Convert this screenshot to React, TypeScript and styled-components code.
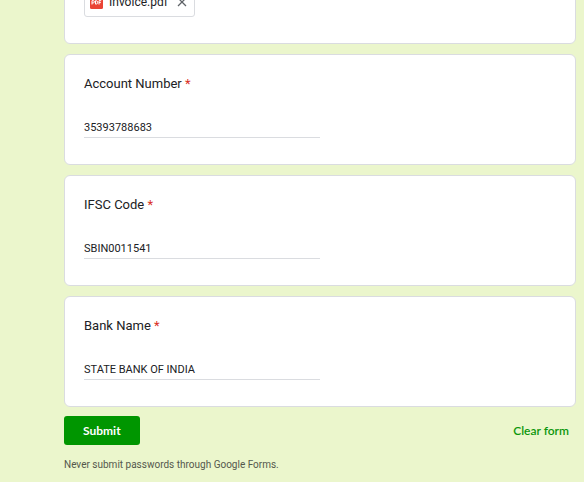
import { useState } from 'react';
import type { FormEvent } from 'react';
import styled, { createGlobalStyle } from 'styled-components';

const GlobalStyle = createGlobalStyle`
  *, *::before, *::after { box-sizing: border-box; }
  body {
    margin: 0;
    background: #ebf6cc;
    color: #202124;
    font-family: Roboto, "Liberation Sans", sans-serif;
  }
`;

const Viewport = styled.div`
  height: 100vh;
  overflow: hidden;
`;

const Form = styled.form`
  margin: -73px 8px 0 64px;
`;

const Cards = styled.div`
  display: flex;
  flex-direction: column;
  gap: 10px;
`;

const Card = styled.section`
  padding: 19px;
  border: 1px solid #dadce0;
  border-radius: 6px;
  background: #fff;
`;

const FileCard = styled(Card)`
  display: flex;
  flex-direction: column;
  align-items: flex-start;
  gap: 20px;
  padding-bottom: 26px;
`;

const QuestionCard = styled(Card)`
  padding-bottom: 26px;
`;

const Question = styled.label`
  display: block;
  font-size: 13px;
  line-height: 20px;
`;

const Required = styled.span`
  color: #d93025;
`;

const Answer = styled.input`
  display: block;
  width: 50%;
  height: 20px;
  margin-top: 24px;
  padding: 0;
  border: 0;
  border-bottom: 1px solid #dadce0;
  border-radius: 0;
  outline: 0;
  background: transparent;
  color: #202124;
  font: 11px/18px Roboto, "Liberation Sans", sans-serif;
`;

const FileChip = styled.div`
  display: flex;
  align-items: center;
  gap: 6px;
  height: 30px;
  padding: 0 6px 0 5px;
  border: 1px solid #dadce0;
  border-radius: 3px;
  font-size: 12px;
  line-height: 16px;
`;

const RemoveButton = styled.button`
  display: flex;
  margin-left: 2px;
  padding: 0;
  border: 0;
  background: none;
  color: #5f6368;
  cursor: pointer;
`;

const Actions = styled.div`
  display: flex;
  align-items: center;
  justify-content: space-between;
  margin-top: 9px;
`;

const Button = styled.button<{ $filled?: boolean }>`
  height: 29px;
  padding: 0 ${({ $filled }) => ($filled ? '19px' : '7px')};
  border: 0;
  border-radius: 3px;
  background: ${({ $filled }) => ($filled ? '#009600' : 'transparent')};
  color: ${({ $filled }) => ($filled ? '#fff' : '#0b960b')};
  font: ${({ $filled }) => ($filled ? 700 : 600)} 12px/16px Lato, "Liberation Sans", sans-serif;
  cursor: pointer;
`;

const Notice = styled.p`
  margin: 13px 0 0;
  color: #54584c;
  font-size: 10px;
  line-height: 14px;
`;

const PdfIcon = () => (
  <svg width="13" height="13" viewBox="0 0 13 13" aria-hidden="true">
    <rect width="13" height="13" rx="1.5" fill="#ea4335" />
    <path
      d="M2 8.5V4.7h1.3a1 1 0 0 1 0 2.2H2M5.5 4.7v3.4h.8a1.3 1.7 0 0 0 0-3.4zM9 8.5V4.7h2.2M9 6.6h1.8"
      fill="none"
      stroke="#fff"
      strokeWidth="1"
    />
  </svg>
);

const CloseIcon = () => (
  <svg width="12" height="12" viewBox="0 0 12 12" aria-hidden="true">
    <path d="M2 2l8 8M10 2l-8 8" fill="none" stroke="currentColor" strokeWidth="1.3" />
  </svg>
);

const questions = [
  { id: 'account', label: 'Account Number', value: '35393788683' },
  { id: 'ifsc', label: 'IFSC Code', value: 'SBIN0011541' },
  { id: 'bank', label: 'Bank Name', value: 'STATE BANK OF INDIA' },
];

export default function App() {
  const [answers, setAnswers] = useState(questions.map((q) => q.value));
  const [hasFile, setHasFile] = useState(true);

  const clear = () => {
    setAnswers(questions.map(() => ''));
    setHasFile(false);
  };

  return (
    <Viewport>
      <GlobalStyle />
      <Form onSubmit={(event: FormEvent) => event.preventDefault()}>
        <Cards>
          <FileCard>
            <Question as="div">&nbsp;</Question>
            {hasFile && (
              <FileChip>
                <PdfIcon />
                <span>Invoice.pdf</span>
                <RemoveButton
                  type="button"
                  aria-label="Remove file"
                  onClick={() => setHasFile(false)}
                >
                  <CloseIcon />
                </RemoveButton>
              </FileChip>
            )}
          </FileCard>
          {questions.map((q, index) => (
            <QuestionCard key={q.id}>
              <Question htmlFor={q.id}>
                {q.label} <Required>*</Required>
              </Question>
              <Answer
                id={q.id}
                required
                value={answers[index]}
                onChange={(event) =>
                  setAnswers(answers.map((a, i) => (i === index ? event.target.value : a)))
                }
              />
            </QuestionCard>
          ))}
        </Cards>
        <Actions>
          <Button type="submit" $filled>
            Submit
          </Button>
          <Button type="button" onClick={clear}>
            Clear form
          </Button>
        </Actions>
        <Notice>Never submit passwords through Google Forms.</Notice>
      </Form>
    </Viewport>
  );
}
